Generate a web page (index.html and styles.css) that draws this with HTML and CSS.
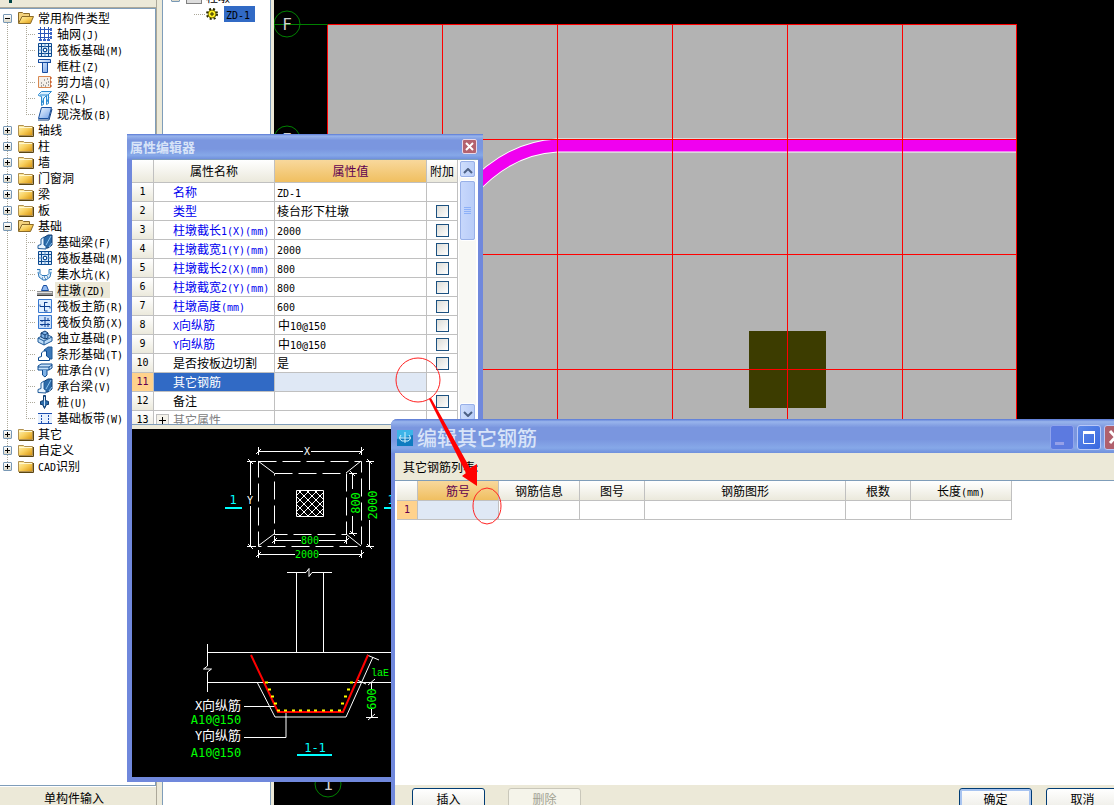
FILE: index.html
```
<!DOCTYPE html>
<html lang="zh-CN">
<head>
	<meta charset="utf-8">
	<title>编辑其它钢筋</title>
	<link rel="stylesheet" href="styles.css">
</head>
<body>
	<svg class="defs" aria-hidden="true">
		<defs>
			<linearGradient id="gold" x1="0" y1="0" x2="1" y2="1">
				<stop offset="0" stop-color="#fff3b8"/>
				<stop offset="0.5" stop-color="#f8cf5c"/>
				<stop offset="1" stop-color="#d8930c"/>
			</linearGradient>
			<linearGradient id="blue" x1="0" y1="0" x2="1" y2="1">
				<stop offset="0" stop-color="#f4faff"/>
				<stop offset="1" stop-color="#6f9fe8"/>
			</linearGradient>
			<symbol id="i-folder" viewBox="0 0 16 16">
				<path d="M.5 3.500h5l1 1h8v9H.5z" fill="url(#gold)" stroke="#b09050"/>
				<path d="M1 5.500h13" stroke="#fff8d0"/>
				<path d="M1 14.500h14.500V5" fill="none" stroke="#5a4614"/>
			</symbol>
			<symbol id="i-open" viewBox="0 0 16 16">
				<path d="M.5 13V2.500h4l1 1h6v3" fill="#f3d27c" stroke="#8a6a28"/>
				<path d="M.5 13.500L4 6.500h11.500l-3 7z" fill="url(#gold)" stroke="#8a6a28"/>
			</symbol>
			<symbol id="i-grid" viewBox="0 0 16 16">
				<path d="M3.500 1v12M7.500 1v12M11.500 1v12M1 3.500h12M1 7.500h12M1 11.500h12" stroke="#2a55b8"/>
				<path d="M13 2h2v3h-2zM13 6h2v3h-2zM13 10h2v3h-2zM2 13h3v2H2zM6 13h3v2H6zM10 13h3v2h-3z" fill="#3c66c8"/>
			</symbol>
			<symbol id="i-raft" viewBox="0 0 16 16">
				<path d="M1.500 1.500h13v13h-13z" fill="#dcebfa" stroke="#0d4a90"/>
				<path d="M4.500 2v12M11.500 2v12M2 4.500h12M2 11.500h12" stroke="#0d4a90"/>
				<path d="M6.500 6.500h3v3h-3z" fill="#fff" stroke="#0d4a90"/>
				<path d="M8 2v4M8 10v4M2 8h4M10 8h4" stroke="#5c90c8"/>
			</symbol>
			<symbol id="i-column" viewBox="0 0 16 16">
				<path d="M1.500 1.500h12v3h-3v10h-5v-10h-4z" fill="url(#blue)" stroke="#164ca0"/>
				<path d="M1 4.500h13" stroke="#164ca0"/>
			</symbol>
			<symbol id="i-wall" viewBox="0 0 16 16">
				<path d="M1.500 2.500h12v11h-12z" fill="#f4efe9" stroke="#d88850"/>
				<path d="M13 4h2M13 8h2M13 12h2" stroke="#c04010"/>
				<path d="M4 9h1M7 6h1M6 11h1M9 9h1M10 5h1M11 11h1M4 12h1M8 12h1M11 8h1" stroke="#555"/>
			</symbol>
			<symbol id="i-beam" viewBox="0 0 16 16">
				<path d="M1.500 4.500l3-3h10l-3 3v9l-2 1v-9l-3 3v6l-2 1v-9l-3-1z" fill="#d9f0ff" stroke="#2c8ad0"/>
				<path d="M3 5h8l3-3M5 13l2-5M10 12l2-5" stroke="#2c8ad0" fill="none"/>
			</symbol>
			<symbol id="i-slab" viewBox="0 0 16 16">
				<path d="M4.500 1.500h10l-3 11h-10z" fill="url(#blue)" stroke="#174f9e"/>
				<path d="M1 14h11l3-11" fill="none" stroke="#0c3c80"/>
			</symbol>
			<symbol id="i-fbeam" viewBox="0 0 16 16">
				<path d="M6 4l5-3h4v10l-4 3H7z" fill="#2c6aa8" stroke="#103c70"/>
				<path d="M1 14.500v-3l3-1V5l3-2v8l2 1v3z" fill="#e8f4ff" stroke="#1f5a98"/>
				<path d="M9 11l5-9M12 13l3-4" stroke="#8cc4f0"/>
			</symbol>
			<symbol id="i-pit" viewBox="0 0 16 16">
				<path d="M0 3.500h3v4l2 2h5l2-2v-4h3v3l-2 5-4 3H6l-4-3-1-5z" fill="#d9ecfb"/>
				<path d="M0 3.500h3v4l2 2h5l2-2v-4h3M1 6l1 5 4 3h3l4-3 1-5" fill="none" stroke="#2c76b8"/>
				<path d="M5 12h1M8 13h1M10 11h1M7 11h1" stroke="#0d4a90"/>
			</symbol>
			<symbol id="i-pier" viewBox="0 0 16 16">
				<path d="M6.500 3.500h3l2 5h-7z" fill="#8fb8f0" stroke="#164ca0"/>
				<path d="M0 9h16v4H0z" fill="#909090"/>
				<path d="M0 10.500h15" stroke="#e0e0e0"/>
				<path d="M0 13.500h16" stroke="#404040"/>
			</symbol>
			<symbol id="i-main" viewBox="0 0 16 16">
				<path d="M1.500 1.500h13v13h-13z" fill="#e0efff" stroke="#3878d0"/>
				<path d="M7.500 4v9h3M3 8.500h10v2M3 8.500v-2M7.500 4.500h3" stroke="#0d3f90" fill="none"/>
			</symbol>
			<symbol id="i-neg" viewBox="0 0 16 16">
				<path d="M1.500 1.500h13v13h-13z" fill="#c8defa" stroke="#3878d0"/>
				<path d="M8 3v10M3 6.500h10M3 10.500h10M5 6v2M11 9v4M5 10v2M11 4v3" stroke="#0d3f90"/>
			</symbol>
			<symbol id="i-iso" viewBox="0 0 16 16">
				<path d="M1 8l8-4 6 3v4l-8 4-6-3z" fill="#bcdcf8" stroke="#1f5a98"/>
				<path d="M1 8l6 3 8-4M7 11v4" stroke="#1f5a98" fill="none"/>
				<path d="M4 3l4-2 3 2v5L8 9 4 7z" fill="#7fb2e6" stroke="#103c70"/>
				<path d="M4 3l4 2 3-2M8 5v4" stroke="#103c70" fill="none"/>
			</symbol>
			<symbol id="i-strip" viewBox="0 0 16 16">
				<path d="M7 4l4-3h4v12h-4z" fill="#3c78b8" stroke="#1f5a98"/>
				<path d="M1.500 14.500v-3l3-1V7l2-2h3v5l3 2v2.500z" fill="#fff" stroke="#0d4a90"/>
			</symbol>
			<symbol id="i-cap" viewBox="0 0 16 16">
				<path d="M1 4l3-2h11v4l-3 2H1z" fill="#c8e2fa" stroke="#0d4a90"/>
				<path d="M1 5h11l3-2M12 5v3" stroke="#0d4a90" fill="none"/>
				<path d="M5.500 8v5L8 15l2-2V8" fill="#7fb2e6" stroke="#0d4a90"/>
			</symbol>
			<symbol id="i-pile" viewBox="0 0 16 16">
				<path d="M6.500 1.500h2v5l3 1v3h-2l-2 4-2-4h-2v-3l3-1z" fill="#2c6aa8" stroke="#103c70"/>
				<path d="M7.500 3v9" stroke="#cfe6fa"/>
			</symbol>
			<symbol id="i-band" viewBox="0 0 16 16">
				<path d="M1 3h14v11H1z" fill="#e8f2ff"/>
				<path d="M1 3.500h14M1 13.500h14" stroke="#1d4fb0"/>
				<path d="M4.500 5v8M11.500 5v8" stroke="#1d4fb0" stroke-dasharray="2 1"/>
			</symbol>
			<symbol id="i-gear" viewBox="0 0 12 12">
				<circle cx="6" cy="6" r="5" fill="none" stroke="#2a2a00" stroke-width="2" stroke-dasharray="2 2"/>
				<circle cx="6" cy="6" r="4" fill="#ffef20" stroke="#6a6400"/>
				<path d="M6 4v4M4 6h4" stroke="#2a2a00"/>
			</symbol>
		</defs>
	</svg>

	<div class="desktop">
		<aside class="side">
			<div class="side-top"><i></i></div>
			<ul class="tree">
				<li><button class="exp minus" aria-label="折叠"></button><svg class="ico"><use href="#i-open"/></svg>常用构件类型
					<ul>
						<li><svg class="ico"><use href="#i-grid"/></svg><span>轴网<b>(J)</b></span></li>
						<li><svg class="ico"><use href="#i-raft"/></svg><span>筏板基础<b>(M)</b></span></li>
						<li><svg class="ico"><use href="#i-column"/></svg><span>框柱<b>(Z)</b></span></li>
						<li><svg class="ico"><use href="#i-wall"/></svg><span>剪力墙<b>(Q)</b></span></li>
						<li><svg class="ico"><use href="#i-beam"/></svg><span>梁<b>(L)</b></span></li>
						<li><svg class="ico"><use href="#i-slab"/></svg><span>现浇板<b>(B)</b></span></li>
					</ul>
				</li>
				<li><button class="exp" aria-label="展开"></button><svg class="ico"><use href="#i-folder"/></svg>轴线</li>
				<li><button class="exp" aria-label="展开"></button><svg class="ico"><use href="#i-folder"/></svg>柱</li>
				<li><button class="exp" aria-label="展开"></button><svg class="ico"><use href="#i-folder"/></svg>墙</li>
				<li><button class="exp" aria-label="展开"></button><svg class="ico"><use href="#i-folder"/></svg>门窗洞</li>
				<li><button class="exp" aria-label="展开"></button><svg class="ico"><use href="#i-folder"/></svg>梁</li>
				<li><button class="exp" aria-label="展开"></button><svg class="ico"><use href="#i-folder"/></svg>板</li>
				<li><button class="exp minus" aria-label="折叠"></button><svg class="ico"><use href="#i-open"/></svg>基础
					<ul>
						<li><svg class="ico"><use href="#i-fbeam"/></svg><span>基础梁<b>(F)</b></span></li>
						<li><svg class="ico"><use href="#i-raft"/></svg><span>筏板基础<b>(M)</b></span></li>
						<li><svg class="ico"><use href="#i-pit"/></svg><span>集水坑<b>(K)</b></span></li>
						<li><svg class="ico"><use href="#i-pier"/></svg><span class="current">柱墩<b>(ZD)</b></span></li>
						<li><svg class="ico"><use href="#i-main"/></svg><span>筏板主筋<b>(R)</b></span></li>
						<li><svg class="ico"><use href="#i-neg"/></svg><span>筏板负筋<b>(X)</b></span></li>
						<li><svg class="ico"><use href="#i-iso"/></svg><span>独立基础<b>(P)</b></span></li>
						<li><svg class="ico"><use href="#i-strip"/></svg><span>条形基础<b>(T)</b></span></li>
						<li><svg class="ico"><use href="#i-cap"/></svg><span>桩承台<b>(V)</b></span></li>
						<li><svg class="ico"><use href="#i-fbeam"/></svg><span>承台梁<b>(V)</b></span></li>
						<li><svg class="ico"><use href="#i-pile"/></svg><span>桩<b>(U)</b></span></li>
						<li><svg class="ico"><use href="#i-band"/></svg><span>基础板带<b>(W)</b></span></li>
					</ul>
				</li>
				<li><button class="exp" aria-label="展开"></button><svg class="ico"><use href="#i-folder"/></svg>其它</li>
				<li><button class="exp" aria-label="展开"></button><svg class="ico"><use href="#i-folder"/></svg>自定义</li>
				<li><button class="exp" aria-label="展开"></button><svg class="ico"><use href="#i-folder"/></svg><b>CAD</b>识别</li>
			</ul>
			<button class="side-tab">单构件输入</button>
		</aside>

		<div class="members">
			<div class="member-root"><button class="exp minus" aria-label="折叠"></button><i></i>柱墩</div>
			<div class="member"><svg class="gear"><use href="#i-gear"/></svg><span><b>ZD-1</b></span></div>
		</div>

		<main class="canvas">
			<svg width="100%" height="100%">
				<g transform="translate(-274 0)">
					<path d="M328 24h689v460H328z" fill="#b3b3b3"/>
					<path d="M470 191Q508 148 557 145.500H1017" fill="none" stroke="#fff" stroke-width="14"/>
					<path d="M470 191Q508 148 557 145.500H1017" fill="none" stroke="#f000f0" stroke-width="12"/>
					<path d="M749 331h77v77h-77z" fill="#3c3c00"/>
					<g stroke="#f00">
						<path d="M328 24.500h689M328 139.500h689M328 254.500h689M328 369.500h689"/>
						<path d="M327.500 24v460M442.500 24v460M557.500 24v460M672.500 24v460M787.500 24v460M902.500 24v460M1016.500 24v460"/>
					</g>
					<g fill="none" stroke="#008000">
						<path d="M274 24.500h54"/>
						<circle cx="287" cy="24" r="13"/>
						<circle cx="287" cy="139" r="13"/>
						<circle cx="328" cy="784" r="13"/>
					</g>
					<g class="axis">
						<text x="287" y="30">F</text>
						<text x="287" y="145">E</text>
						<text x="328" y="790">1</text>
					</g>
				</g>
			</svg>
		</main>

		<section class="window props">
			<header>
				<h2>属性编辑器</h2>
				<button class="close" aria-label="关闭"><svg width="9" height="9"><path d="M1 1l7 7M8 1l-7 7" stroke="#fff" stroke-width="2"/></svg></button>
			</header>
			<div class="props-grid">
				<table class="grid">
					<colgroup><col class="c-no"><col class="c-name"><col class="c-value"><col class="c-add"></colgroup>
					<thead>
						<tr><th></th><th>属性名称</th><th class="active">属性值</th><th>附加</th></tr>
					</thead>
					<tbody>
						<tr><th>1</th><td class="key">名称</td><td><b>ZD-1</b></td><td></td></tr>
						<tr><th>2</th><td class="key">类型</td><td>棱台形下柱墩</td><td><input type="checkbox" aria-label="附加 类型"></td></tr>
						<tr><th>3</th><td class="key">柱墩截长<b>1(X)(mm)</b></td><td><b>2000</b></td><td><input type="checkbox" aria-label="附加 截长1"></td></tr>
						<tr><th>4</th><td class="key">柱墩截宽<b>1(Y)(mm)</b></td><td><b>2000</b></td><td><input type="checkbox" aria-label="附加 截宽1"></td></tr>
						<tr><th>5</th><td class="key">柱墩截长<b>2(X)(mm)</b></td><td><b>800</b></td><td><input type="checkbox" aria-label="附加 截长2"></td></tr>
						<tr><th>6</th><td class="key">柱墩截宽<b>2(Y)(mm)</b></td><td><b>800</b></td><td><input type="checkbox" aria-label="附加 截宽2"></td></tr>
						<tr><th>7</th><td class="key">柱墩高度<b>(mm)</b></td><td><b>600</b></td><td><input type="checkbox" aria-label="附加 高度"></td></tr>
						<tr><th>8</th><td class="key"><b>X</b>向纵筋</td><td class="bar">中<b>10@150</b></td><td><input type="checkbox" aria-label="附加 X向纵筋"></td></tr>
						<tr><th>9</th><td class="key"><b>Y</b>向纵筋</td><td class="bar">中<b>10@150</b></td><td><input type="checkbox" aria-label="附加 Y向纵筋"></td></tr>
						<tr><th>10</th><td class="key own">是否按板边切割</td><td>是</td><td><input type="checkbox" aria-label="附加 是否按板边切割"></td></tr>
						<tr class="selected"><th>11</th><td class="key own">其它钢筋</td><td class="edit"></td><td></td></tr>
						<tr><th>12</th><td class="key own">备注</td><td></td><td><input type="checkbox" aria-label="附加 备注"></td></tr>
						<tr><th>13</th><td class="key group"><button class="more" aria-label="展开"></button>其它属性</td><td></td><td></td></tr>
					</tbody>
				</table>
				<div class="scroll">
					<button aria-label="向上"><svg width="10" height="6"><path d="M1 5l4-4 4 4" fill="none" stroke="#4d6185" stroke-width="2"/></svg></button>
					<div class="thumb"></div>
					<button class="down" aria-label="向下"><svg width="10" height="6"><path d="M1 1l4 4 4-4" fill="none" stroke="#4d6185" stroke-width="2"/></svg></button>
				</div>
			</div>
			<svg class="drawing" width="345" height="348">
				<defs>
					<pattern id="hatch" width="8" height="8" patternUnits="userSpaceOnUse">
						<path d="M0 0l8 8M8 0l-8 8" stroke="#fff"/>
					</pattern>
				</defs>
				<g transform="translate(-132 -429)">
					<g fill="none" stroke="#fff">
						<path d="M258.500 461.500h103v85h-103z" stroke-dasharray="18 6"/>
						<path d="M274.500 473.500h72v61h-72z" stroke-dasharray="18 6"/>
						<path d="M258 461l16 12M361 461l-15 12M258 546l16-12M361 546l-15-12"/>
						<path d="M296.500 490.500h27v26h-27z" fill="url(#hatch)"/>
						<path d="M258 451.500h45M311 451.500h51M258.500 447v8M361.500 447v8M256 454l5-5M359 454l5-5"/>
						<path d="M250.500 461v34M250.500 506v41M247 461.500h9M247 546.500h9M248 459l5 5M248 544l5 5"/>
						<path d="M352.500 473v16M352.500 516v18M349 473.500h8M349 533.500h8M350 471l5 5M350 531l5 5"/>
						<path d="M369.500 461v29M369.500 520v27M366 461.500h8M366 546.500h8M367 459l5 5M367 544l5 5"/>
						<path d="M274 540.500h27M319 540.500h28M274.500 536v8M346.500 536v8M272 543l5-5M344 543l5-5"/>
						<path d="M258 554.500h37M319 554.500h43M258.500 550v8M361.500 550v8M256 557l5-5M359 557l5-5"/>
						<path d="M287 572.500h19l3-4v8l3-4h20M296.500 573v79M323.500 573v79"/>
						<path d="M207 652.500h270M207 682.500h270M207.500 644v22l-4 3h8l-4 3v20"/>
						<path d="M257 682l18 35h71l27-60M367 655l12 5M371.500 682v8M371.500 709v8M366 717.500h12M357 680l9 4M368 685l7-6M368 720l7-6"/>
						<path d="M244 706.500h31M244 737.500h42v-26"/>
					</g>
					<path d="M251 655l27 57h65l25-57" fill="none" stroke="#f00" stroke-width="2"/>
					<path d="M265 682.500h3M268 689.500h3M271 696.500h3M274 703.500h3M277 710.500h3M284 710.500h3M292 710.500h3M299 710.500h3M307 710.500h3M314 710.500h3M322 710.500h3M330 710.500h3M338 710.500h3M341 703.500h3M344 696.500h3M347 689.500h3M350 682.500h3" stroke="#ff0" stroke-width="2"/>
					<path d="M225 508h17M384 508h17M297 755h35" stroke="#0ff" stroke-width="2"/>
					<g class="dim small" fill="#fff">
						<text x="307" y="455">X</text>
						<text x="250" y="504">Y</text>
					</g>
					<g class="dim small">
						<text x="310" y="544">800</text>
						<text x="307" y="558">2000</text>
					</g>
					<g class="dim">
						<text transform="translate(360 503) rotate(-90)">800</text>
						<text transform="translate(377 505) rotate(-90)">2000</text>
						<text transform="translate(376 699) rotate(-90)">600</text>
						<text class="serif" x="380" y="676">laE</text>
						<text x="216" y="724">A10@150</text>
						<text x="216" y="757">A10@150</text>
					</g>
					<g class="dim" fill="#fff">
						<text x="218" y="710">X<tspan class="cjk">向纵筋</tspan></text>
						<text x="218" y="740">Y<tspan class="cjk">向纵筋</tspan></text>
					</g>
					<g class="dim" fill="#0ff">
						<text x="233" y="504">1</text>
						<text x="391" y="504">1</text>
						<text x="315" y="752">1-1</text>
					</g>
				</g>
			</svg>
		</section>

		<section class="window dialog">
			<header>
				<svg class="logo" width="16" height="16">
					<path d="M0 0h16v16H0z" fill="#0f7cc0"/>
					<path d="M0 0h16v5L0 9z" fill="#3cb4e8"/>
					<path d="M8 2v11M2 8h12M4 5q-3 4 1 6h6q4-2 1-6" fill="none" stroke="#d4f2ff"/>
				</svg>
				<h2>编辑其它钢筋</h2>
				<button class="sys dim-btn" aria-label="最小化"><svg width="22" height="23"><path d="M4 16h9v3H4z" fill="#96a0e8"/></svg></button>
				<button class="sys" aria-label="最大化"><svg width="22" height="23"><path d="M5.500 6.500h11v11h-11z" fill="none" stroke="#fff"/><path d="M5 6.500h12" stroke="#fff" stroke-width="3"/></svg></button>
				<button class="sys red" aria-label="关闭"><svg width="22" height="23"><path d="M5 5l11 12M16 5L5 17" stroke="#fff" stroke-width="3"/></svg></button>
			</header>
			<p class="caption">其它钢筋列表:</p>
			<div class="list">
				<table class="grid">
					<colgroup><col class="b-no"><col class="b-bar"><col class="b-bar"><col class="b-fig"><col class="b-shape"><col class="b-fig"><col class="b-len"></colgroup>
					<thead>
						<tr><th></th><th class="active">筋号</th><th>钢筋信息</th><th>图号</th><th>钢筋图形</th><th>根数</th><th>长度<b>(mm)</b></th></tr>
					</thead>
					<tbody>
						<tr class="selected"><th>1</th><td class="edit"></td><td></td><td></td><td></td><td></td><td></td></tr>
					</tbody>
				</table>
			</div>
			<footer>
				<button class="cmd">插入</button>
				<button class="cmd" disabled>删除</button>
				<span class="spacer"></span>
				<button class="cmd default">确定</button>
				<button class="cmd">取消</button>
			</footer>
		</section>

		<!-- hint arrow from the property cell to the list cell -->
		<svg class="hint" width="140" height="200">
			<g transform="translate(-380 -340)">
				<circle cx="418" cy="380" r="22" fill="none" stroke="#f22"/>
				<ellipse cx="487" cy="506" rx="14" ry="18" fill="none" stroke="#f22"/>
				<path d="M429 399l2-1 39 70 7-4v22l-15-10 4-3z" fill="#f00"/>
			</g>
		</svg>
	</div>
</body>
</html>
```

FILE: styles.css
```
*{
	box-sizing: border-box;
}
body{
	margin: 0;
	font: 12px/16px "Noto Sans CJK SC", sans-serif;
	color: #000;
}
/* latin part of a label, half the width of a han character */
b{
	font-family: "DejaVu Sans Mono", monospace;
	font-size: 10px;
	line-height: 12px;
	font-weight: normal;
}
button{
	font: inherit;
	padding: 0;
	border: 0;
	background: none;
}
h2,p,ul{
	margin: 0;
	padding: 0;
}
ul{
	list-style: none;
}
.defs{
	position: absolute;
	width: 0;
	height: 0;
}
.desktop{
	position: relative;
	display: flex;
	height: 100vh;
	overflow: hidden;
	background: #ece9d8;
}

/* component tree */
.side{
	display: flex;
	flex-direction: column;
	width: 157px;
	border-right: 1px solid #aca899;
}
.side-top{
	height: 8px;
	border-bottom: 1px solid #aca899;
}
.side-top i{
	display: block;
	width: 3px;
	height: 3px;
	margin-left: 9px;
	background: #044;
}
.tree{
	flex: 1;
	padding-top: 1px;
	border: 1px solid #7f9db9;
	border-left: 0;
	background: repeating-linear-gradient(#aca899 0 1px, transparent 1px 2px) 7px 8px / 1px 450px no-repeat #fff;
	white-space: nowrap;
}
.tree li{
	line-height: 16px;
	padding-left: 3px;
}
.tree ul{
	margin-left: 23px;
	background: repeating-linear-gradient(#aca899 0 1px, transparent 1px 2px) 0 0 / 1px calc(100% - 8px) no-repeat;
}
.tree ul li{
	display: flex;
	height: 16px;
	padding: 0 0 0 11px;
	background: repeating-linear-gradient(90deg, #aca899 0 1px, transparent 1px 2px) 0 8px / 10px 1px no-repeat;
}
.tree ul span{
	padding: 0 5px 0 2px;
	margin-left: 2px;
}
.tree .current{
	background: #ece9d8;
}
.ico{
	width: 16px;
	height: 16px;
	margin-right: 4px;
	vertical-align: top;
}
.tree ul .ico{
	margin-right: 0;
}
.exp{
	width: 9px;
	height: 9px;
	margin: 4px 6px 0 0;
	border: 1px solid #7898b5;
	border-radius: 1px;
	vertical-align: top;
	background:
		linear-gradient(#000,#000) 1px 3px / 5px 1px no-repeat,
		linear-gradient(#000,#000) 3px 1px / 1px 5px no-repeat,
		linear-gradient(#fff,#dcd8c8);
}
.exp.minus{
	background:
		linear-gradient(#000,#000) 1px 3px / 5px 1px no-repeat,
		linear-gradient(#fff,#dcd8c8);
}
.side-tab{
	height: 19px;
	padding: 3px 8px 0 0;
	line-height: 15px;
	border-top: 1px solid #fff;
}

/* member list */
.members{
	width: 109px;
	margin: 0 3px 0 5px;
	border: 1px solid #7f9db9;
	border-width: 0 1px;
	background: #fff;
	overflow: hidden;
}
.member-root{
	display: flex;
	align-items: flex-end;
	height: 16px;
	margin: -11px 0 0 8px;
}
.member-root .exp{
	margin-bottom: 3px;
}
.member-root i{
	width: 16px;
	height: 12px;
	margin: 0 4px 1px 0;
	border: 1px solid #808080;
	background: #ddd;
}
.member{
	display: flex;
	align-items: center;
	height: 16px;
	margin: 1px 0 0 31px;
	background: repeating-linear-gradient(90deg, #aca899 0 1px, transparent 1px 2px) 0 8px / 12px 1px no-repeat;
}
.member span{
	margin-left: 6px;
	padding: 0 5px 0 2px;
	background: #316ac5;
}
.gear{
	width: 12px;
	height: 12px;
	margin-left: 12px;
}

.canvas{
	flex: 1;
	background: #000;
}
.canvas svg{
	display: block;
}
.axis{
	font: 16px "DejaVu Sans Mono", monospace;
	fill: #d0d0d0;
	text-anchor: middle;
}

/* windows */
.window{
	position: absolute;
	background: #ece9d8;
	border: solid #7088dc;
}
.window header{
	display: flex;
	align-items: center;
	color: #d8e4f8;
	background: linear-gradient(#5878d4, #98b4ec 8%, #7a96df 25%, #7a96df 60%, #86a8e8 85%, #7090dc);
}
.window h2{
	flex: 1;
	white-space: nowrap;
}
.props{
	left: 127px;
	top: 134px;
	width: 356px;
	border-width: 0 5px 5px;
	border-radius: 4px 4px 0 0;
}
.props header{
	height: 25px;
	margin: 0 -5px;
	padding: 0 6px 0 3px;
}
.props h2{
	font-size: 13px;
	line-height: 20px;
}
.close{
	display: flex;
	align-items: center;
	justify-content: center;
	width: 15px;
	height: 15px;
	border: 1px solid #e8d8e8;
	border-radius: 2px;
	background: #b4626e;
}
.props-grid{
	display: flex;
	height: 266px;
	border: 1px solid #7f9db9;
	border-width: 1px 0;
	background: #fff;
	overflow: hidden;
}
.drawing{
	display: block;
	margin-top: 4px;
	background: #000;
}
.dim{
	font: 12px "DejaVu Sans Mono", monospace;
	fill: #0f0;
	text-anchor: middle;
}
.dim[fill="#fff"]{
	fill: #fff;
}
.dim[fill="#0ff"]{
	fill: #0ff;
}
.dim.small{
	font-size: 10px;
}
.dim .cjk{
	font-family: "Noto Sans CJK SC", sans-serif;
	font-size: 13px;
}
.dim .serif{
	font: 10px "Liberation Mono", monospace;
}

/* grids */
.grid{
	table-layout: fixed;
	border-collapse: separate;
	border-spacing: 0;
	align-self: flex-start;
}
.grid th,
.grid td{
	height: 19px;
	padding: 0;
	border: solid #c0c0c0;
	border-width: 0 1px 1px 0;
	font-weight: normal;
	line-height: 16px;
	white-space: nowrap;
}
.grid th{
	background: linear-gradient(#fff, #ebe9dc);
}
.grid tbody th{
	font: 10px/16px "DejaVu Sans Mono", monospace;
}
.grid th.active{
	color: #600050;
	background: linear-gradient(#f8d89c, #f0bf60);
}
.grid .selected th{
	color: #600050;
	background: #ffd28c;
}
.grid .edit{
	background: #dfe8f5;
}
.props .grid{
	width: 326px;
}
.props thead th{
	height: 23px;
}
.props td{
	padding-left: 2px;
}
.props td:last-child{
	padding-left: 0;
	text-align: center;
}
.props .bar{
	padding-left: 3px;
}
.props .key{
	padding-left: 19px;
	color: #0000f0;
}
.props .own{
	color: #000;
}
.props .selected .key{
	color: #fff;
	background: #316ac5;
}
.props .group{
	padding-left: 2px;
	color: #808080;
}
.more{
	width: 13px;
	height: 13px;
	margin: 2px 4px 0 0;
	border: 1px solid #c0c0c0;
	vertical-align: top;
	background:
		linear-gradient(#000,#000) 2px 5px / 7px 1px no-repeat,
		linear-gradient(#000,#000) 5px 2px / 1px 7px no-repeat,
		#f4f2ea;
}
.c-no{ width: 22px; }
.c-name{ width: 121px; }
.c-value{ width: 152px; }
.c-add{ width: 31px; }
input[type="checkbox"]{
	appearance: none;
	display: block;
	width: 13px;
	height: 13px;
	margin: 1px auto;
	border: 1px solid #1c5180;
	background: linear-gradient(135deg, #dcdcd7, #fff);
}
.scroll{
	display: flex;
	flex-direction: column;
	width: 17px;
	margin-left: 1px;
	background: #f8f8f4;
}
.scroll button,
.thumb{
	height: 18px;
	border: 1px solid #fff;
	border-radius: 3px;
	outline: 1px solid #98b0e8;
	outline-offset: -2px;
	background: linear-gradient(90deg, #d0dffc, #b8ccf8);
}
.thumb{
	height: 61px;
	margin-top: 2px;
	background:
		repeating-linear-gradient(#8cb0f8 0 1px, transparent 1px 2px) 4px 26px / 7px 8px no-repeat,
		linear-gradient(90deg, #c8d8fc, #b8ccf8);
}
.scroll .down{
	margin: auto 0 3px;
}

/* rebar dialog */
.dialog{
	left: 391px;
	right: -16px;
	top: 419px;
	bottom: -16px;
	display: flex;
	flex-direction: column;
	border-width: 0 4px;
	border-radius: 6px 6px 0 0;
}
.dialog header{
	flex: none;
	height: 34px;
	margin: 0 -4px;
	padding: 3px 2px 0 6px;
	border-radius: 6px 0 0 0;
}
.logo{
	margin-right: 4px;
}
.dialog h2{
	font-size: 20px;
	font-weight: 500;
	line-height: 24px;
}
.sys{
	width: 24px;
	height: 25px;
	margin-left: 3px;
	border: 1px solid #b8c8f8;
	border-radius: 3px;
	background: linear-gradient(135deg, #5c88e8, #3868e0);
}
.sys svg{
	display: block;
}
.sys.dim-btn{
	border-color: #90a4ec;
	background: #5c7ae0;
}
.sys.red{
	background: #b0606c;
}
.caption{
	height: 27px;
	padding: 6px 8px;
}
.list{
	flex: 1;
	padding: 0 0 0 2px;
	border-top: 1px solid #7f9db9;
	background: #fff;
}
.dialog .grid{
	width: 615px;
}
.dialog thead th{
	height: 20px;
}
.b-no{ width: 21px; }
.b-bar{ width: 81px; }
.b-fig{ width: 65px; }
.b-shape{ width: 201px; }
.b-len{ width: 101px; }
.dialog footer{
	display: flex;
	height: 36px;
	padding: 3px 7px 9px 17px;
}
.cmd{
	width: 73px;
	height: 24px;
	padding-bottom: 3px;
	border: 1px solid #003c74;
	border-radius: 3px;
	background: linear-gradient(#fff, #ecebe4);
}
.cmd + .cmd{
	margin-left: 23px;
}
.cmd.default{
	box-shadow: inset 0 0 0 2px #a8c4f0;
}
.cmd.default + .cmd{
	margin-left: 14px;
}
.cmd:disabled{
	color: #a1a192;
	border-color: #c9c7ba;
	background: #f5f4ea;
}
.spacer{
	flex: 1;
}
.hint{
	position: absolute;
	left: 380px;
	top: 340px;
	pointer-events: none;
}
```
